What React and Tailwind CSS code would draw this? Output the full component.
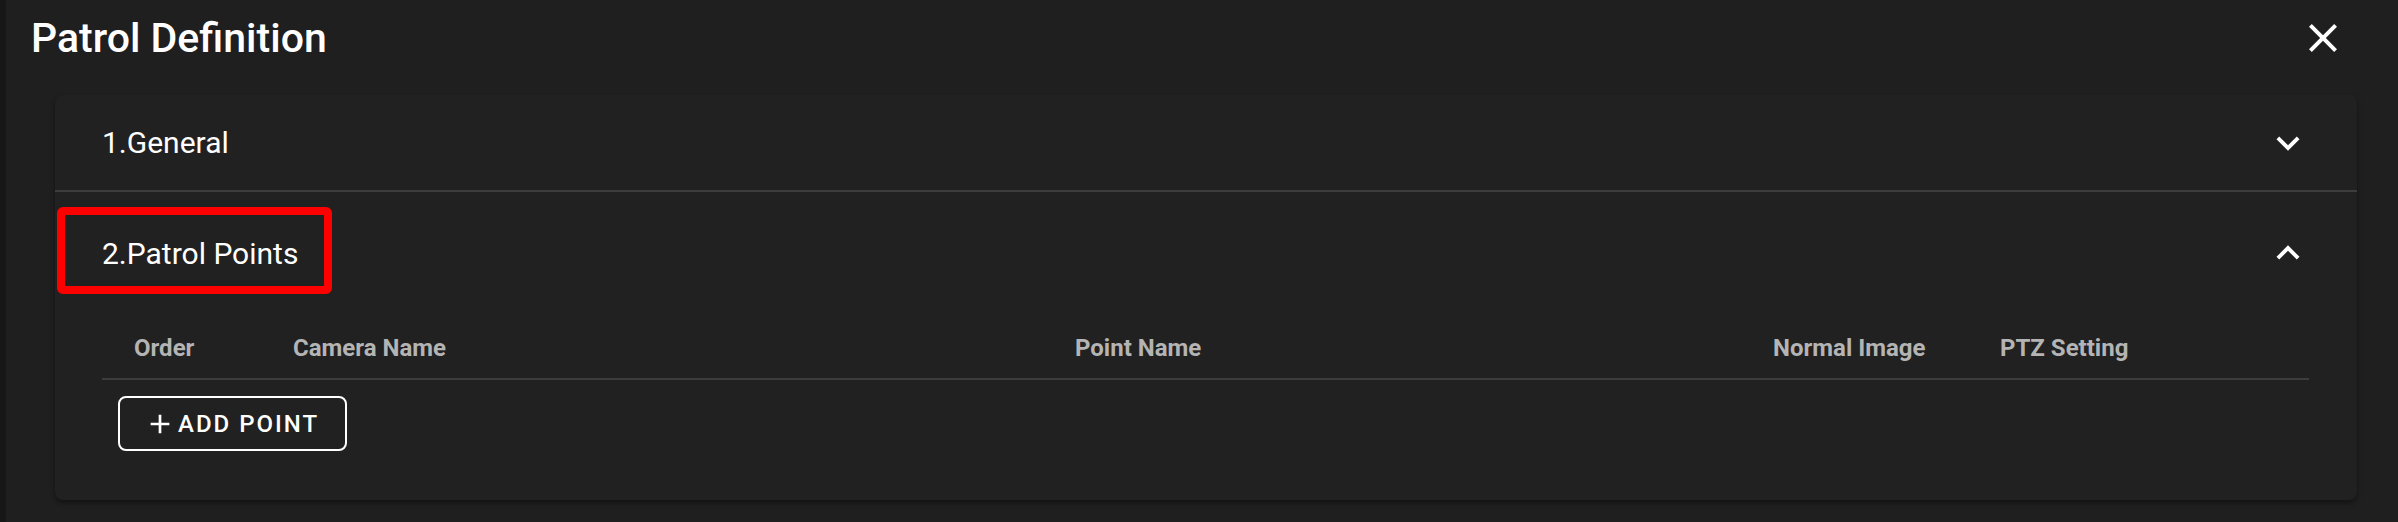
import React from 'react';

const CloseIcon = ({ className }) => (
  <svg className={className} viewBox="0 0 24 24" fill="currentColor">
    <path d="M19 6.41 17.59 5 12 10.59 6.41 5 5 6.41 10.59 12 5 17.59 6.41 19 12 13.41 17.59 19 19 17.59 13.41 12z" />
  </svg>
);

const ExpandIcon = ({ className }) => (
  <svg className={className} viewBox="0 0 24 24" fill="currentColor">
    <path d="M16.59 8.59 12 13.17 7.41 8.59 6 10l6 6 6-6z" />
  </svg>
);

const AddIcon = ({ className }) => (
  <svg className={className} viewBox="0 0 24 24" fill="currentColor">
    <path d="M19 13h-6v6h-2v-6H5v-2h6V5h2v6h6v2z" />
  </svg>
);

const columns = ['Order', 'Camera Name', 'Point Name', 'Normal Image', 'PTZ Setting'];

export default function App() {
  return (
    <div
      className="w-full h-[522px] bg-[#1f1f1f] border-l-[6px] border-[#171717] text-white overflow-hidden"
      style={{ fontFamily: 'Roboto, "Liberation Sans", sans-serif' }}
    >
      {/* Dialog header */}
      <div className="flex items-start justify-between h-[95px] pt-[14px] pl-[25px] pr-[51px]">
        <h2 className="text-[41px] leading-[48px] font-medium">Patrol Definition</h2>
        <CloseIcon className="w-[48px] h-[48px] text-white" />
      </div>

      {/* Accordion card */}
      <div className="ml-[49px] mr-[41px] bg-[#212121] rounded-[8px] shadow-[0_3px_5px_rgba(0,0,0,0.4)]">
        {/* 1.General */}
        <div className="flex items-center justify-between h-[95px] pl-[47px] pr-[46px]">
          <span className="text-[30px]">1.General</span>
          <ExpandIcon className="w-[46px] h-[46px]" />
        </div>
        <div className="h-[2px] bg-[#3d3d3d]" />

        {/* 2.Patrol Points */}
        <div className="relative flex items-center justify-between h-[122px] pl-[47px] pr-[46px]">
          <span className="text-[30px]">2.Patrol Points</span>
          <ExpandIcon className="w-[46px] h-[46px] rotate-180" />
          <div className="absolute left-[2px] top-[15px] w-[275px] h-[87px] border-[8px] border-[#ff0000] rounded-[6px]" />
        </div>

        <div className="pl-[47px] pr-[48px] pb-[49px]">
          <div className="grid grid-cols-[159px_782px_698px_227px_1fr] h-[66px] items-center pt-[4px] border-b-2 border-[#3d3d3d]">
            {columns.map((c) => (
              <div key={c} className="pl-8 text-[24px] font-bold text-[#b4b4b4]">
                {c}
              </div>
            ))}
          </div>

          <button className="mt-[16px] ml-[16px] flex items-center gap-[2px] w-[229px] h-[55px] pl-[24px] border-2 border-white rounded-[8px] text-[24px] font-medium tracking-[2px] uppercase">
            <AddIcon className="w-[32px] h-[32px]" />
            <span>Add Point</span>
          </button>
        </div>
      </div>
    </div>
  );
}
